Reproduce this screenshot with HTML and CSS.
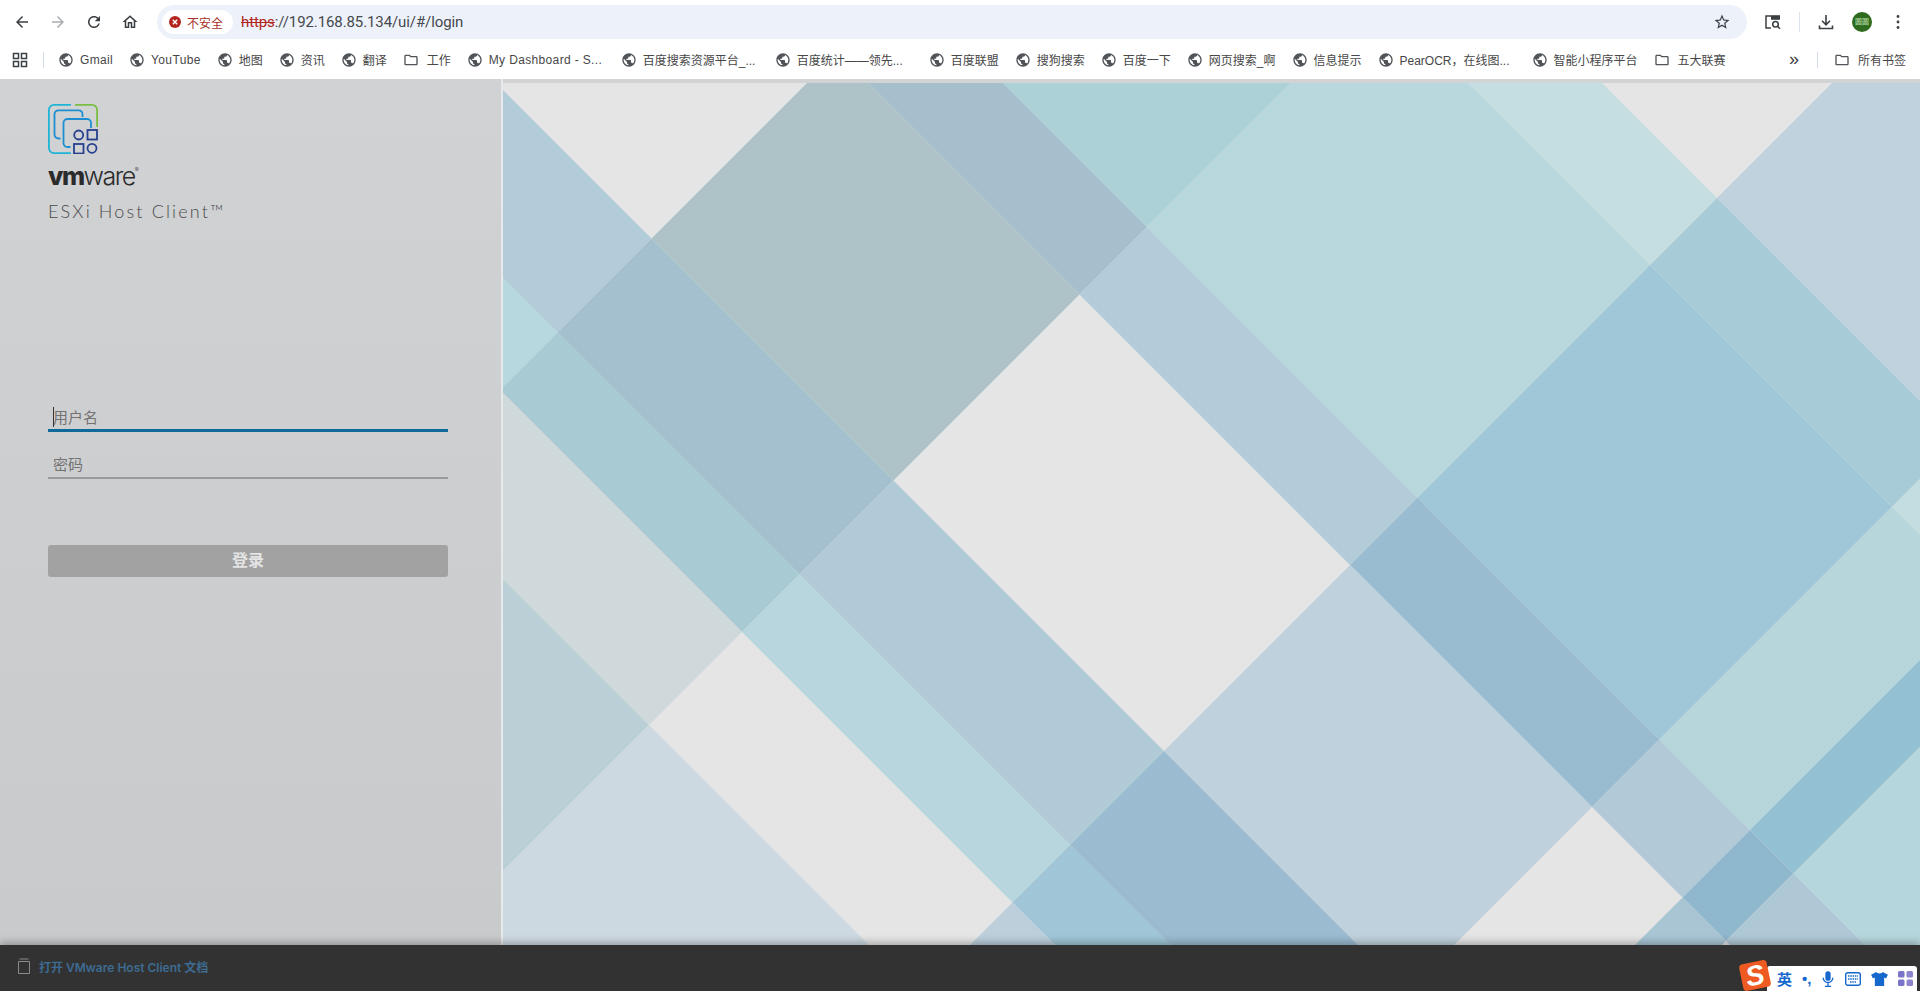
FILE: index.html
```html
<!DOCTYPE html>
<html lang="zh-CN">
<head>
  <meta charset="UTF-8" />
  <title>VMware ESXi</title>
  <link rel="stylesheet" href="styles.css">
</head>
<body>
  <svg class="sprites" width="0" height="0">
    <symbol id="globe" viewBox="0 0 24 24"><path d="M12 2C6.48 2 2 6.48 2 12s4.48 10 10 10 10-4.48 10-10S17.52 2 12 2zm-1 17.93c-3.95-.49-7-3.85-7-7.93 0-.62.08-1.21.21-1.79L9 15v1c0 1.1.9 2 2 2v1.93zm6.9-2.54c-.26-.81-1-1.39-1.9-1.39h-1v-3c0-.55-.45-1-1-1H8v-2h2c.55 0 1-.45 1-1V7h2c1.1 0 2-.9 2-2v-.41c2.93 1.19 5 4.06 5 7.41 0 2.08-.8 3.97-2.1 5.39z"/></symbol>
    <symbol id="folder" viewBox="0 0 24 24"><path d="M9.17 6l2 2H20v10H4V6h5.17M10 4H4c-1.1 0-1.99.9-1.99 2L2 18c0 1.1.9 2 2 2h16c1.1 0 2-.9 2-2V8c0-1.1-.9-2-2-2h-8l-2-2z"/></symbol>
  </svg>

  <div class="toolbar">
    <span class="tool"><svg viewBox="0 0 24 24" width="18" height="18"><path d="M20 11H7.83l5.59-5.59L12 4l-8 8 8 8 1.41-1.41L7.83 13H20v-2z"/></svg></span>
    <span class="tool off"><svg viewBox="0 0 24 24" width="18" height="18"><path d="M12 4l-1.41 1.41L16.17 11H4v2h12.17l-5.58 5.59L12 20l8-8z"/></svg></span>
    <span class="tool"><svg viewBox="0 0 24 24" width="18" height="18"><path d="M17.65 6.35C16.2 4.9 14.21 4 12 4c-4.42 0-7.99 3.58-7.99 8s3.57 8 7.99 8c3.73 0 6.84-2.55 7.73-6h-2.08c-.82 2.33-3.04 4-5.65 4-3.31 0-6-2.69-6-6s2.69-6 6-6c1.66 0 3.14.69 4.22 1.78L13 11h7V4l-2.35 2.35z"/></svg></span>
    <span class="tool"><svg viewBox="0 0 24 24" width="18" height="18"><path d="M12 5.69l5 4.5V18h-2v-6H9v6H7v-7.81l5-4.5M12 3L2 12h3v8h6v-6h2v6h6v-8h3L12 3z"/></svg></span>
    <div class="omnibox">
      <div class="chip">
        <svg viewBox="0 0 12 12" width="12" height="12"><circle cx="6" cy="6" r="6" fill="#b3261e"/><path d="M3.8 3.8l4.4 4.4M8.2 3.8L3.8 8.2" stroke="#fff" stroke-width="1.5"/></svg>
        <span>不安全</span>
      </div>
      <div class="url"><s>https</s><span>://192.168.85.134/ui/#/login</span></div>
      <svg class="star" viewBox="0 0 24 24" width="18" height="18"><path d="M22 9.24l-7.19-.62L12 2 9.19 8.63 2 9.24l5.46 4.73L5.82 21 12 17.27 18.18 21l-1.63-7.03L22 9.24zM12 15.4l-3.76 2.27 1-4.28-3.32-2.88 4.38-.38L12 6.1l1.71 4.04 4.38.38-3.32 2.88 1 4.28L12 15.4z"/></svg>
    </div>
    <span class="tool tab-search"><svg viewBox="0 0 18 18" width="18" height="18"><path d="M7 3H2v12h5" fill="none" stroke="#3c4043" stroke-width="1.5"/><path d="M7 2.2h9v4.6H7z"/><circle cx="11.5" cy="11.2" r="2.8" fill="none" stroke="#3c4043" stroke-width="1.5"/><path d="M13.5 13.2l2.5 2.5" stroke="#3c4043" stroke-width="1.5"/></svg></span>
    <span class="tool-sep"></span>
    <span class="tool"><svg viewBox="0 0 18 18" width="18" height="18"><path d="M9 2v9.5M5 7.8l4 4 4-4M2.5 12.5v3h13v-3" fill="none" stroke="#3c4043" stroke-width="1.6"/></svg></span>
    <span class="tool"><span class="avatar">圆圆</span></span>
    <span class="tool"><svg viewBox="0 0 18 18" width="18" height="18"><circle cx="9" cy="3.5" r="1.4"/><circle cx="9" cy="9" r="1.4"/><circle cx="9" cy="14.5" r="1.4"/></svg></span>
  </div>

  <div class="bookmarks">
    <svg class="apps" viewBox="0 0 16 16" width="16" height="16"><path d="M1.5 1.5h5v5h-5zM9.5 1.5h5v5h-5zM1.5 9.5h5v5h-5zM9.5 9.5h5v5h-5z" fill="none" stroke="#3c4043" stroke-width="1.5"/></svg>
    <span class="bar-sep"></span>
    <a class="bm latin"><svg><use href="#globe"/></svg>Gmail</a>
    <a class="bm latin"><svg><use href="#globe"/></svg>YouTube</a>
    <a class="bm"><svg><use href="#globe"/></svg>地图</a>
    <a class="bm"><svg><use href="#globe"/></svg>资讯</a>
    <a class="bm"><svg><use href="#globe"/></svg>翻译</a>
    <a class="bm dir"><svg><use href="#folder"/></svg>工作</a>
    <a class="bm long latin"><svg><use href="#globe"/></svg>My Dashboard - S...</a>
    <a class="bm long"><svg><use href="#globe"/></svg>百度搜索资源平台_...</a>
    <a class="bm long"><svg><use href="#globe"/></svg>百度统计——领先...</a>
    <a class="bm"><svg><use href="#globe"/></svg>百度联盟</a>
    <a class="bm"><svg><use href="#globe"/></svg>搜狗搜索</a>
    <a class="bm"><svg><use href="#globe"/></svg>百度一下</a>
    <a class="bm"><svg><use href="#globe"/></svg>网页搜索_啊</a>
    <a class="bm"><svg><use href="#globe"/></svg>信息提示</a>
    <a class="bm long"><svg><use href="#globe"/></svg>PearOCR，在线图...</a>
    <a class="bm"><svg><use href="#globe"/></svg>智能小程序平台</a>
    <a class="bm dir"><svg><use href="#folder"/></svg>五大联赛</a>
    <span class="more">»</span>
    <span class="bar-sep"></span>
    <a class="bm dir all"><svg><use href="#folder"/></svg>所有书签</a>
  </div>

  <main class="page">
    <section class="login">
      <svg class="logo" viewBox="0 0 50 50" width="50" height="50" fill="none" stroke-width="1.8">
        <path d="M23 .9H6A5.1 5.1 0 0 0 .9 6v38A5.1 5.1 0 0 0 6 49.100h17" stroke="#1fb4d6"/>
        <path d="M27 .9h17A5.100 5.100 0 0 1 49.100 6v17" stroke="#78be43"/>
        <path d="M34.500 13V10A4 4 0 0 0 30.500 6.300H10.500A4 4 0 0 0 6.500 10.300V30A4 4 0 0 0 10.500 34.500h2" stroke="#1d8fd1"/>
        <path d="M43 24v-4A4 4 0 0 0 39 15H19.500A4 4 0 0 0 15.500 19v20A4 4 0 0 0 19.500 43h3" stroke="#1d8fd1"/>
        <g stroke="#27408f" stroke-width="1.8">
          <circle cx="30.700" cy="31" r="4.500"/>
          <rect x="39.500" y="26" width="9.500" height="9.500"/>
          <rect x="26" y="40" width="9.500" height="9.500"/>
          <circle cx="44" cy="44.300" r="4.500"/>
        </g>
      </svg>
      <div class="brand"><b>vm</b>ware<sup>®</sup></div>
      <div class="product">ESXi Host Client™</div>
      <form class="fields">
        <div class="field active"><span class="caret"></span>用户名</div>
        <div class="field">密码</div>
        <div class="submit">登录</div>
      </form>
    </section>
    <div class="artwork">
      <svg viewBox="503 83 1417 862" preserveAspectRatio="none">
        <rect x="503" y="83" width="1417" height="862" fill="#e5e5e6"/>
        <g transform="matrix(.5 .5 -.5 .5 0 0)">
          <!-- columns run on x+y, rows on y-x -->
          <rect x="1915" y="-2400" width="1300" height="881" fill="#c0d2de"/>

          <rect x="1374" y="-1519" width="541" height="134" fill="#c4dee1"/>
          <rect x="1915" y="-1519" width="484" height="134" fill="#a8cbd8"/>
          <rect x="2399" y="-1519" width="800" height="134" fill="#c4dde0"/>

          <rect x="600" y="-1385" width="774" height="465" fill="#acd2d8"/>
          <rect x="1374" y="-1385" width="541" height="465" fill="#b9d8de"/>
          <rect x="1915" y="-1385" width="484" height="465" fill="#9fc7d7"/>
          <rect x="2399" y="-1385" width="181" height="465" fill="#b6d6dc"/>
          <rect x="2580" y="-1385" width="87" height="465" fill="#93c0d3"/>
          <rect x="2667" y="-1385" width="600" height="465" fill="#b5d6dc"/>

          <rect x="600" y="-920" width="774" height="135" fill="#a6bfcd"/>
          <rect x="1374" y="-920" width="541" height="135" fill="#b2ccd9"/>
          <rect x="1915" y="-920" width="484" height="135" fill="#9abcd0"/>
          <rect x="2399" y="-920" width="181" height="135" fill="#b2cad7"/>
          <rect x="2580" y="-920" width="87" height="135" fill="#8fb7cd"/>
          <rect x="2667" y="-920" width="600" height="135" fill="#afc8d6"/>

          <rect x="890" y="-785" width="484" height="372" fill="#aec3c7"/>
          <rect x="1915" y="-785" width="484" height="372" fill="#bed1dc"/>
          <rect x="2580" y="-785" width="87" height="372" fill="#a9c5d4"/>

          <rect x="400" y="-413" width="490" height="188" fill="#b2ccd9"/>
          <rect x="890" y="-413" width="484" height="188" fill="#a4bfcd"/>
          <rect x="1374" y="-413" width="541" height="188" fill="#b1cad7"/>
          <rect x="1915" y="-413" width="484" height="188" fill="#9abbd0"/>

          <rect x="400" y="-225" width="490" height="115" fill="#b6d8de"/>
          <rect x="890" y="-225" width="484" height="115" fill="#a8cad3"/>
          <rect x="1374" y="-225" width="541" height="115" fill="#b7d6dd"/>
          <rect x="1915" y="-225" width="484" height="115" fill="#9fc5d6"/>

          <rect x="890" y="-110" width="484" height="186" fill="#cfd8da"/>
          <rect x="1915" y="-110" width="484" height="186" fill="#bccfdb"/>

          <rect x="890" y="76" width="484" height="800" fill="#bacfd6"/>
          <rect x="1374" y="76" width="541" height="800" fill="#cdd9e0"/>
        </g>
      </svg>
    </div>
  </main>

  <footer class="doc-bar">
    <svg viewBox="0 0 12 16" width="12" height="16" fill="none" stroke="#8a8a8a"><path d="M.5 3.5h11v12H.5zM1.5 1h9"/></svg>
    <a>打开 VMware Host Client 文档</a>
  </footer>

  <div class="ime">
    <div class="ime-logo"><span>S</span></div>
    <div class="ime-bar">
      <b>英</b>
      <span class="punct">•,</span>
      <svg viewBox="0 0 16 20" width="14" height="18"><rect x="5" y="1" width="6" height="11" rx="3" fill="#1668cc"/><path d="M2.5 8.5a5.5 5.5 0 0 0 11 0M8 14v4M4.5 18.5h7" fill="none" stroke="#1668cc" stroke-width="1.5"/></svg>
      <svg viewBox="0 0 16 14" width="16" height="14"><rect x=".7" y=".7" width="14.6" height="12.6" rx="2" fill="none" stroke="#1668cc" stroke-width="1.4"/><path d="M3 4h10M3 7h10M5 10h6" stroke="#1668cc" stroke-width="1.5" stroke-dasharray="1.5 .8"/></svg>
      <svg viewBox="0 0 18 15" width="17" height="14"><path d="M5.5 0L0 3l2 4 2-1v9h10V6l2 1 2-4-5.500-3C12 2 6 2 5.500 0z" fill="#1668cc"/></svg>
      <svg viewBox="0 0 15 15" width="15" height="15"><rect width="6.5" height="6.5" rx="1.5" fill="#7a74c9"/><rect x="8.5" width="6.5" height="6.5" rx="1.5" fill="#8d84cf"/><rect y="8.5" width="6.5" height="6.5" rx="1.5" fill="#7a74c9"/><rect x="8.5" y="8.5" width="6.5" height="6.5" rx="1.5" fill="#8d84cf"/></svg>
    </div>
  </div>
</body>
</html>
```

FILE: styles.css
```css
* {
  box-sizing: border-box;
}
html, body {
  height: 100%;
}
body {
  margin: 0;
  display: flex;
  flex-direction: column;
  overflow: hidden;
  font-family: "Liberation Sans", "Noto Sans CJK SC", sans-serif;
  color: #3c4043;
  background: #fff;
}
.sprites {
  position: absolute;
}

/* browser chrome */
.toolbar {
  height: 40px;
  padding: 5px 4px 1px;
  display: flex;
  align-items: center;
  background: #fff;
}
.tool {
  width: 36px;
  height: 34px;
  flex: none;
  display: flex;
  align-items: center;
  justify-content: center;
}
.tool svg {
  fill: #3c4043;
}
.tool.off svg {
  fill: #a9acb0;
}
.tab-search {
  margin-left: 8px;
}
.tool-sep {
  width: 1px;
  height: 20px;
  margin: 0 8px 0 8px;
  background: #dde3ec;
}
.avatar {
  width: 20px;
  height: 20px;
  border-radius: 50%;
  background: #2e6b1e;
  color: #bfe0b0;
  font-size: 7px;
  line-height: 20px;
  text-align: center;
  white-space: nowrap;
}
.omnibox {
  flex: 1;
  height: 34px;
  margin-left: 9px;
  padding: 0 16px 0 5px;
  display: flex;
  align-items: center;
  background: #edf2fa;
  border-radius: 17px;
}
.chip {
  width: 71px;
  height: 24px;
  padding-left: 7px;
  display: flex;
  align-items: center;
  gap: 6px;
  background: #fff;
  border-radius: 12px;
  color: #a8322a;
  font-size: 12px;
}
.url {
  margin-left: 8px;
  font-family: Roboto, "Liberation Sans", sans-serif;
  font-size: 15px;
  letter-spacing: -.1px;
  color: #45484c;
}
.url s {
  color: #b3261e;
}
.star {
  margin-left: auto;
  fill: #3c4043;
}

.bookmarks {
  height: 39px;
  padding-left: 12px;
  display: flex;
  align-items: center;
  background: #fff;
  font-size: 12px;
  color: #474747;
}
.bar-sep {
  width: 1px;
  height: 16px;
  margin: 0 6px 0 15px;
  background: #d3dcea;
}
.bm {
  flex: none;
  padding: 0 8px;
  display: flex;
  align-items: center;
  gap: 6px;
  white-space: nowrap;
}
.bm svg {
  width: 16px;
  height: 16px;
  flex: none;
  fill: #505458;
}
.bm.latin {
  letter-spacing: .35px;
}
.bm.dir {
  gap: 8px;
}
.bm.long {
  width: 154px;
}
.more {
  margin-left: auto;
  width: 20px;
  font-size: 18px;
  color: #3c4043;
}
.more + .bar-sep {
  margin: 0 8px 0 8px;
}
.bm.all {
  padding-right: 14px;
}

/* login page */
.page {
  flex: 1;
  min-height: 0;
  display: flex;
}
.login {
  width: 501px;
  padding: 25px 53px 0 48px;
  flex: none;
  background: linear-gradient(#d1d2d4, #c9cacc);
}
.logo {
  display: block;
}
.brand {
  margin-top: 7px;
  font-family: Inter, "Liberation Sans", sans-serif;
  font-size: 25px;
  font-weight: 300;
  line-height: 30px;
  letter-spacing: -1.5px;
  color: #2b2b2b;
}
.brand b {
  font-weight: 800;
}
.brand sup {
  font-size: 6px;
  letter-spacing: 0;
  vertical-align: 13px;
  line-height: 0;
}
.product {
  margin-top: 8px;
  font-family: Lato, "Liberation Sans", sans-serif;
  font-weight: 300;
  font-size: 18px;
  line-height: 24px;
  letter-spacing: 2.15px;
  color: #4a4a4a;
}
.fields {
  margin-top: 173px;
  display: flex;
  flex-direction: column;
}
.field {
  position: relative;
  height: 36px;
  padding: 11px 0 0 5px;
  border-bottom: 2px solid #9a9a9b;
  font-size: 15px;
  line-height: 22px;
  color: #737373;
}
.field + .field {
  margin-top: 11px;
}
.field.active {
  border-bottom: 3px solid #0f6a99;
}
.caret {
  position: absolute;
  left: 5px;
  top: 11px;
  width: 1px;
  height: 20px;
  background: #333;
}
.submit {
  height: 32px;
  margin-top: 66px;
  background: #a2a2a3;
  border-radius: 3px;
  color: #e4e4e4;
  font-size: 16px;
  font-weight: 700;
  line-height: 32px;
  text-align: center;
}
.artwork {
  flex: 1;
  min-width: 0;
  padding: 4px 0 0 2px;
  background: linear-gradient(to right, #e8e9ea 2px, #d1d3d5 2px);
}
.artwork svg {
  display: block;
  width: 100%;
  height: 100%;
}

.doc-bar {
  position: relative;
  height: 46px;
  padding: 0 0 4px 18px;
  flex: none;
  display: flex;
  align-items: center;
  gap: 9px;
  background: #323232;
  box-shadow: 0 -3px 7px rgba(0, 0, 0, .25);
  font-family: Inter, "Noto Sans CJK SC", sans-serif;
  font-size: 12px;
  font-weight: 600;
  color: #3d6b91;
}

/* IME status bar sits over the page */
.ime {
  position: absolute;
  right: 3px;
  bottom: 0;
  width: 177px;
  height: 29px;
}
.ime-logo {
  position: absolute;
  left: 1px;
  top: 0;
  width: 28px;
  height: 27px;
  z-index: 1;
  background: #ee5a22;
  border-radius: 4px;
  transform: rotate(-12deg);
  color: #fff;
  font-size: 28px;
  font-weight: 700;
  font-style: italic;
  line-height: 27px;
  text-align: center;
}
.ime-bar {
  position: absolute;
  left: 27px;
  right: 0;
  top: 4px;
  height: 25px;
  padding: 0 4px 0 10px;
  display: flex;
  align-items: center;
  justify-content: space-between;
  background: #fff;
  border-radius: 3px 3px 0 0;
  color: #1668cc;
  font-size: 15px;
}
.punct {
  font-weight: 700;
}
```
